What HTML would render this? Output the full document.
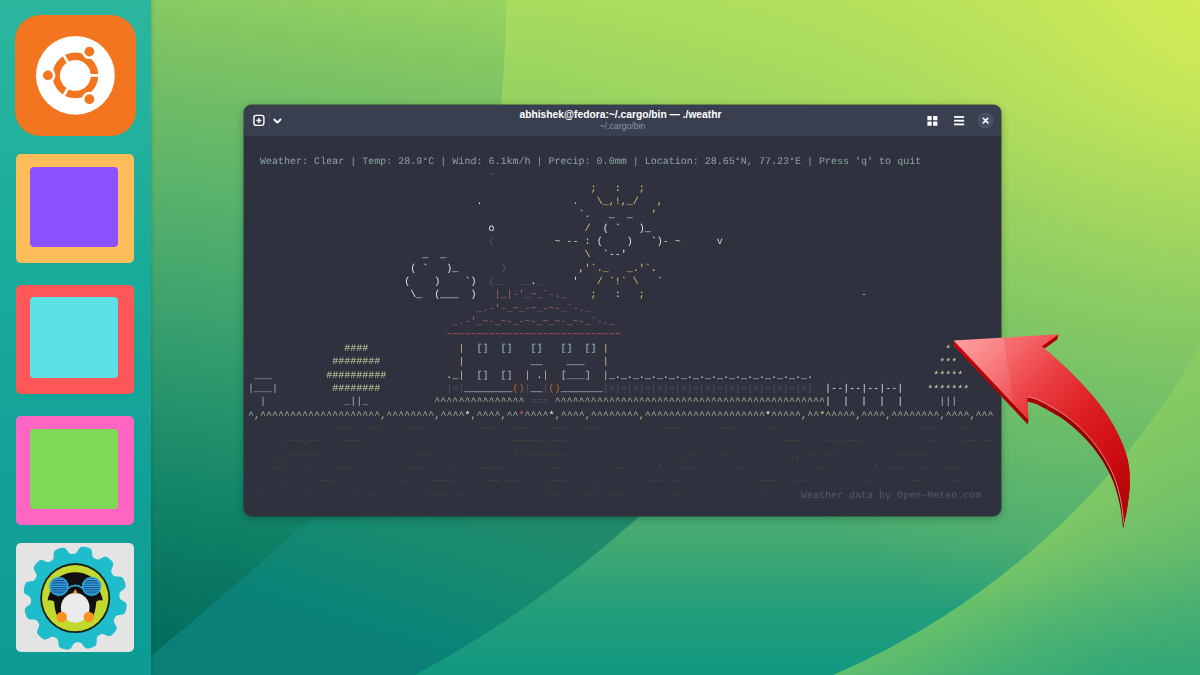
<!DOCTYPE html>
<html lang="en"><head><meta charset="utf-8"><title>weathr terminal weather</title>
<style>
html,body{margin:0;padding:0}
body{width:1200px;height:675px;overflow:hidden;position:relative;background:#3fa872;font-family:"Liberation Sans",sans-serif}
svg{position:absolute;display:block;overflow:visible}
#bg{left:0;top:0}
#dock{position:absolute;left:0;top:0;width:150.5px;height:675px;box-shadow:1px 0 3px rgba(0,40,30,.18);background:linear-gradient(180deg,#2bb69e 0%,#1aad9b 35%,#12a198 70%,#0d9b96 100%)}
.sq{position:absolute;left:16px;width:118px;height:109px;border-radius:5px}
.sq i{position:absolute;left:14px;top:12.5px;width:88px;height:80.5px;border-radius:4px;display:block}
#win{position:absolute;left:243.6px;top:105px;width:757.2px;height:411px;border-radius:8px;background:#2f323e;overflow:hidden;box-shadow:0 0 0 1px rgba(20,30,30,.35),0 2px 9px rgba(0,0,0,.28)}
#hb{position:absolute;left:0;top:0;width:100%;height:31px;background:#3a3f50;border-bottom:1px solid #292c38}
#ttl{position:absolute;left:.4px;width:753px;top:4.4px;text-align:center;color:#fff;font-weight:bold;font-size:10.27px;line-height:12px;white-space:nowrap}
#sub{position:absolute;left:2.4px;width:753px;top:16.4px;text-align:center;color:#8d93a3;font-size:8.75px;line-height:10px;white-space:nowrap}
#term{position:absolute;left:4.3px;top:51.3px;will-change:transform;margin:0;font-family:"Liberation Mono",monospace;font-size:10.03px;line-height:13.35px;color:#cfd3da;white-space:pre;text-rendering:geometricPrecision}
.st{color:#8ca3a4}.sn{color:#d7c564}.sp{color:#d9d6b4}.cl{color:#dfe2e6}.dm{color:#50556a}.gy{color:#a9adb4}
.rf{color:#9a6273}.rd{color:#c4545f}.wh{color:#d8dade}.wl{color:#c9b48e}.wn{color:#a3bcc4}.fd{color:#4b5163}.or{color:#b8681e}
.gr{color:#a6b497}.cm{color:#c2b675}.fw{color:#f2f2f2}.fr{color:#e0586a}.fy{color:#e8d46a}.pn{color:#cbdcae;position:relative;top:.9px}.tr{color:#c3d79f}
.dt{color:#4a4739}.ft{color:#535969}
</style></head><body>
<svg id="bg" width="1200" height="675" viewBox="0 0 1200 675">
<defs>
<linearGradient id="gBase" gradientUnits="userSpaceOnUse" x1="0" y1="0" x2="0" y2="675"><stop offset="0" stop-color="#a8dc5e"/><stop offset=".148" stop-color="#97d361"/><stop offset=".296" stop-color="#7ec666"/><stop offset=".444" stop-color="#6abd69"/><stop offset=".667" stop-color="#53b16d"/><stop offset=".8" stop-color="#43a972"/><stop offset=".9" stop-color="#249e7a"/><stop offset="1" stop-color="#119880"/></linearGradient>
<radialGradient id="gHi" gradientUnits="userSpaceOnUse" cx="1250" cy="-50" r="720"><stop offset="0" stop-color="#d6ed56" stop-opacity=".95"/><stop offset=".15" stop-color="#d6ed56" stop-opacity=".85"/><stop offset=".33" stop-color="#d4ec56" stop-opacity=".55"/><stop offset=".5" stop-color="#d4ec56" stop-opacity=".33"/><stop offset=".66" stop-color="#d4ec56" stop-opacity=".2"/><stop offset="1" stop-color="#d4ec56" stop-opacity="0"/></radialGradient>
<linearGradient id="gL" gradientUnits="userSpaceOnUse" x1="500" y1="0" x2="400" y2="675"><stop offset="0" stop-color="#98d460"/><stop offset=".077" stop-color="#88ca62"/><stop offset=".149" stop-color="#7cc264"/><stop offset=".207" stop-color="#70bd66"/><stop offset=".352" stop-color="#58b26b"/><stop offset=".497" stop-color="#40a46e"/><stop offset=".642" stop-color="#27956c"/><stop offset=".787" stop-color="#138468"/><stop offset=".932" stop-color="#077460"/><stop offset="1" stop-color="#046e5c"/></linearGradient>
<linearGradient id="gC" gradientUnits="userSpaceOnUse" x1="520" y1="517" x2="470" y2="675"><stop offset="0" stop-color="#208b6a"/><stop offset=".27" stop-color="#188a6e"/><stop offset=".52" stop-color="#138972"/><stop offset=".78" stop-color="#0d8576"/><stop offset="1" stop-color="#0a8078"/></linearGradient>
<radialGradient id="gAf" gradientUnits="userSpaceOnUse" cx="527.8" cy="-34.1" r="972"><stop offset=".7942" stop-color="#fff" stop-opacity="1"/><stop offset=".8663" stop-color="#fff" stop-opacity=".66"/><stop offset=".9383" stop-color="#fff" stop-opacity=".46"/><stop offset="1" stop-color="#fff" stop-opacity=".42"/></radialGradient><linearGradient id="gAy" gradientUnits="userSpaceOnUse" x1="0" y1="340" x2="0" y2="675"><stop offset="0" stop-color="#b4e65a" stop-opacity=".1"/><stop offset=".075" stop-color="#b4e65a" stop-opacity=".18"/><stop offset=".239" stop-color="#b4e65a" stop-opacity=".3"/><stop offset=".478" stop-color="#b4e65a" stop-opacity=".4"/><stop offset=".716" stop-color="#b4e65a" stop-opacity=".47"/><stop offset="1" stop-color="#b4e65a" stop-opacity=".48"/></linearGradient><mask id="mA" maskUnits="userSpaceOnUse" x="0" y="0" width="1200" height="675"><path d="M833.1 675A772 772 0 0 0 1200 345.5V675Z" fill="url(#gAf)"/></mask>
</defs>
<rect width="1200" height="675" fill="url(#gBase)"/>
<rect width="1200" height="675" fill="url(#gHi)"/>
<path d="M414.7 675A1128 1128 0 0 0 638.3 517.3L664 492L300 492L150 640V675Z" fill="url(#gC)"/>
<path d="M150 0H506.2Q505.8 52 501.3 104.3L470 300L312.6 516.8A5024.6 5024.6 0 0 1 150 656.7Z" fill="url(#gL)"/>
<rect x="820" y="330" width="380" height="345" fill="url(#gAy)" mask="url(#mA)"/>
</svg>
<div id="dock">
<svg width="121" height="121" viewBox="0 0 121 121" style="left:14.5px;top:14.5px">
<rect width="121" height="121" rx="25" fill="#f3751f"/>
<circle cx="60.4" cy="60.4" r="39.4" fill="#fff"/>
<circle cx="60.4" cy="60.4" r="19" fill="none" stroke="#f3751f" stroke-width="7.6"/>
<g stroke="#fff" stroke-width="2.6"><path d="M60.4 60.4L90 60.4M60.4 60.4L45.6 34.8M60.4 60.4L45.6 86"/></g>
<circle cx="60.4" cy="60.4" r="15.2" fill="#fff"/>
<g fill="#f3751f" stroke="#fff" stroke-width="2.6"><circle cx="74.4" cy="36.6" r="6.2"/><circle cx="32.9" cy="60.4" r="6.2"/><circle cx="74.4" cy="84.2" r="6.2"/></g>
</svg>
<div class="sq" style="top:154px;background:#ffbd59"><i style="background:#8c52ff"></i></div>
<div class="sq" style="top:284.5px;background:#ff5757"><i style="background:#5ce1e6"></i></div>
<div class="sq" style="top:416px;background:#ff66c4"><i style="background:#7ed957"></i></div>
<div class="sq" style="top:542.5px;background:#e4e4e4"></div>
<svg width="118" height="109" viewBox="0 0 118 109" style="left:16px;top:542.5px">
<path d="M103.8 55.1L103.5 54.3L103.4 53.6L103.3 52.8L103.3 52.0L103.4 51.2L103.5 50.4L103.9 49.6L104.6 48.7L105.9 47.7L107.4 46.6L108.7 45.5L109.3 44.4L109.6 43.5L109.6 42.5L109.5 41.6L109.3 40.7L109.0 39.9L108.8 39.0L108.5 38.1L108.1 37.3L107.8 36.5L107.4 35.6L106.8 34.9L106.0 34.2L104.9 33.8L103.2 33.6L101.3 33.6L99.7 33.6L98.6 33.3L97.8 32.8L97.2 32.3L96.7 31.7L96.3 31.0L95.9 30.4L95.5 29.7L95.2 28.9L95.2 28.0L95.4 26.9L95.9 25.4L96.7 23.6L97.2 22.0L97.3 20.8L97.0 19.8L96.6 19.0L96.0 18.3L95.4 17.6L94.7 17.0L94.1 16.4L93.4 15.8L92.7 15.2L91.9 14.7L91.2 14.2L90.3 13.8L89.3 13.6L88.1 13.8L86.6 14.5L84.9 15.5L83.5 16.2L82.4 16.5L81.5 16.5L80.7 16.3L80.0 16.1L79.3 15.7L78.6 15.4L77.9 14.9L77.3 14.4L76.8 13.7L76.4 12.6L76.1 11.0L75.9 9.1L75.6 7.5L75.0 6.3L74.3 5.6L73.5 5.2L72.7 4.8L71.8 4.6L70.9 4.3L70.0 4.1L69.1 4.0L68.2 3.8L67.3 3.7L66.4 3.7L65.5 3.8L64.6 4.1L63.6 4.9L62.6 6.3L61.7 7.9L60.8 9.2L60.0 10.1L59.2 10.5L58.4 10.8L57.7 10.9L56.9 11.0L56.1 11.0L55.3 10.9L54.5 10.8L53.7 10.4L52.8 9.7L51.8 8.4L50.7 6.9L49.6 5.6L48.5 5.0L47.6 4.7L46.6 4.7L45.7 4.8L44.8 5.0L44.0 5.3L43.1 5.5L42.2 5.8L41.4 6.2L40.6 6.5L39.7 6.9L39.0 7.5L38.3 8.3L37.9 9.4L37.7 11.1L37.7 13.0L37.7 14.6L37.4 15.7L36.9 16.5L36.4 17.1L35.8 17.6L35.1 18.0L34.5 18.4L33.8 18.8L33.0 19.1L32.1 19.1L31.0 18.9L29.5 18.4L27.7 17.6L26.1 17.1L24.9 17.0L23.9 17.3L23.1 17.7L22.4 18.3L21.7 18.9L21.1 19.6L20.5 20.2L19.9 20.9L19.3 21.6L18.8 22.4L18.3 23.1L17.9 24.0L17.7 25.0L17.9 26.2L18.6 27.7L19.6 29.4L20.3 30.8L20.6 31.9L20.6 32.8L20.4 33.6L20.2 34.3L19.8 35.0L19.5 35.7L19.0 36.4L18.5 37.0L17.8 37.5L16.7 37.9L15.1 38.2L13.2 38.4L11.6 38.7L10.4 39.3L9.7 40.0L9.3 40.8L8.9 41.6L8.7 42.5L8.4 43.4L8.2 44.3L8.1 45.2L7.9 46.1L7.8 47.0L7.8 47.9L7.9 48.8L8.2 49.7L9.0 50.7L10.4 51.7L12.0 52.6L13.3 53.5L14.2 54.3L14.6 55.1L14.9 55.9L15.0 56.6L15.1 57.4L15.1 58.2L15.0 59.0L14.9 59.8L14.5 60.6L13.8 61.5L12.5 62.5L11.0 63.6L9.7 64.7L9.1 65.8L8.8 66.7L8.8 67.7L8.9 68.6L9.1 69.5L9.4 70.3L9.6 71.2L9.9 72.1L10.3 72.9L10.6 73.7L11.0 74.6L11.6 75.3L12.4 76.0L13.5 76.4L15.2 76.6L17.1 76.6L18.7 76.6L19.8 76.9L20.6 77.4L21.2 77.9L21.7 78.5L22.1 79.2L22.5 79.8L22.9 80.5L23.2 81.3L23.2 82.2L23.0 83.3L22.5 84.8L21.7 86.6L21.2 88.2L21.1 89.4L21.4 90.4L21.8 91.2L22.4 91.9L23.0 92.6L23.7 93.2L24.3 93.8L25.0 94.4L25.7 95.0L26.5 95.5L27.2 96.0L28.1 96.4L29.1 96.6L30.3 96.4L31.8 95.7L33.5 94.7L34.9 94.0L36.0 93.7L36.9 93.7L37.7 93.9L38.4 94.1L39.1 94.5L39.8 94.8L40.5 95.3L41.1 95.8L41.6 96.5L42.0 97.6L42.3 99.2L42.5 101.1L42.8 102.7L43.4 103.9L44.1 104.6L44.9 105.0L45.7 105.4L46.6 105.6L47.5 105.9L48.4 106.1L49.3 106.2L50.2 106.4L51.1 106.5L52.0 106.5L52.9 106.4L53.8 106.1L54.8 105.3L55.8 103.9L56.7 102.3L57.6 101.0L58.4 100.1L59.2 99.7L60.0 99.4L60.7 99.3L61.5 99.2L62.3 99.2L63.1 99.3L63.9 99.4L64.7 99.8L65.6 100.5L66.6 101.8L67.7 103.3L68.8 104.6L69.9 105.2L70.8 105.5L71.8 105.5L72.7 105.4L73.6 105.2L74.4 104.9L75.3 104.7L76.2 104.4L77.0 104.0L77.8 103.7L78.7 103.3L79.4 102.7L80.1 101.9L80.5 100.8L80.7 99.1L80.7 97.2L80.7 95.6L81.0 94.5L81.5 93.7L82.0 93.1L82.6 92.6L83.3 92.2L83.9 91.8L84.6 91.4L85.4 91.1L86.3 91.1L87.4 91.3L88.9 91.8L90.7 92.6L92.3 93.1L93.5 93.2L94.5 92.9L95.3 92.5L96.0 91.9L96.7 91.3L97.3 90.6L97.9 90.0L98.5 89.3L99.1 88.6L99.6 87.8L100.1 87.1L100.5 86.2L100.7 85.2L100.5 84.0L99.8 82.5L98.8 80.8L98.1 79.4L97.8 78.3L97.8 77.4L98.0 76.6L98.2 75.9L98.6 75.2L98.9 74.5L99.4 73.8L99.9 73.2L100.6 72.7L101.7 72.3L103.3 72.0L105.2 71.8L106.8 71.5L108.0 70.9L108.7 70.2L109.1 69.4L109.5 68.6L109.7 67.7L110.0 66.8L110.2 65.9L110.3 65.0L110.5 64.1L110.6 63.2L110.6 62.3L110.5 61.4L110.2 60.5L109.4 59.5L108.0 58.5L106.4 57.6L105.1 56.7L104.2 55.9Z" fill="#1fbccb"/>
<g transform="translate(59.2 55.1)">
<circle r="35" fill="#14201a"/><circle r="33.2" fill="#c3d82f"/>
<path d="M-27.5 2.5C-27 -3 -24.5 -5.5 -24 -9C-22 -20 -11 -25.8 0 -25.8C11 -25.8 22 -20 24 -9C24.5 -5.5 27 -3 27.5 2.5C24 1.5 21.5 2.5 21 4C20.5 12 19 17 16 21L-16 21C-19 17 -20.5 12 -21 4C-21.5 2.5 -24 1.5 -27.5 2.5Z" fill="#101010"/>
<ellipse cx="0" cy="9.7" rx="14.3" ry="14.9" fill="#ebebeb"/>
<circle cx="-13.4" cy="18.9" r="5.2" fill="#f7941d"/><circle cx="13.6" cy="18.9" r="5.2" fill="#f7941d"/>
<path d="M-2.6 -4.6L0 -9L2.6 -4.6Z" fill="#f7941d"/>
<circle cx="-16.2" cy="-11.7" r="8.9" fill="#1b4f8f" stroke="#2aa3dc" stroke-width="1.7"/>
<path d="M-20.8 -18.6h9.2M-23.1 -16.3h13.8M-24.2 -14.0h15.9M-24.5 -11.7h16.6M-24.2 -9.4h15.9M-23.1 -7.1h13.8M-20.8 -4.8h9.2" stroke="#38a9e0" stroke-width="1.1" fill="none"/>
<circle cx="16.4" cy="-11.7" r="8.9" fill="#1b4f8f" stroke="#2aa3dc" stroke-width="1.7"/>
<path d="M11.8 -18.6h9.2M9.5 -16.3h13.8M8.4 -14.0h15.9M8.1 -11.7h16.6M8.4 -9.4h15.9M9.5 -7.1h13.8M11.8 -4.8h9.2" stroke="#38a9e0" stroke-width="1.1" fill="none"/>
<path d="M-7.6 -9.5Q0 -16 7.8 -9.5" stroke="#2aa3dc" stroke-width="1.8" fill="none"/>
</g>
</svg>
</div>
<div id="win">
<div id="hb">
<svg width="40" height="31" viewBox="0 0 40 31" style="left:0;top:0">
<rect x="9.9" y="10.4" width="10" height="10" rx="2.3" fill="none" stroke="#fff" stroke-width="1.4"/>
<path d="M12.4 15.4h5M14.9 12.9v5" stroke="#fff" stroke-width="1.5" fill="none"/>
<path d="M25.5 7.3v18.2" stroke="#464c5f" stroke-width="1"/>
<path d="M30.3 14.5l3.1 3.1 3.1-3.1" stroke="#fff" stroke-width="1.9" fill="none" stroke-linecap="round" stroke-linejoin="round"/>
</svg>
<div id="ttl">abhishek@fedora:~/.cargo/bin — ./weathr</div>
<div id="sub">~/.cargo/bin</div>
<svg width="80" height="31" viewBox="0 0 80 31" style="left:677px;top:0">
<g fill="#fff"><rect x="6.4" y="10.9" width="4.3" height="4.3" rx=".5"/><rect x="12.1" y="10.9" width="4.3" height="4.3" rx=".5"/><rect x="6.4" y="16.5" width="4.3" height="4.3" rx=".5"/><rect x="12.1" y="16.5" width="4.3" height="4.3" rx=".5"/>
<rect x="33" y="11.1" width="10.2" height="1.8"/><rect x="33" y="14.8" width="10.2" height="1.8"/><rect x="33" y="18.5" width="10.2" height="1.8"/></g>
<circle cx="64.6" cy="15.6" r="8" fill="#4a4f61"/>
<path d="M62.3 13.3l4.6 4.6M66.9 13.3l-4.6 4.6" stroke="#fff" stroke-width="1.6" stroke-linecap="round"/>
</svg>
</div>
<pre id="term">  <span class="st">Weather: Clear | Temp: 28.9°C | Wind: 6.1km/h | Precip: 0.0mm | Location: 28.65°N, 77.23°E | Press 'q' to quit</span>
                                        <span class="dm">~</span>
                                                         <span class="sn">;</span>   <span class="sp">:</span>   <span class="sn">;</span>
                                      <span class="cl">.</span>               <span class="sp">.</span>   <span class="sn">\_,!,_/   ,</span>
                                                       <span class="sp">`.</span>   <span class="cl">_  _</span>   <span class="sn">'</span>
                                        <span class="cl">o</span>               <span class="sn">/</span>  <span class="cl">( `   )_</span>
                                        <span class="dm">(</span>          <span class="sp">~ -- :</span> <span class="cl">(    )   `)</span><span class="sp">- ~      v</span>
                             <span class="cl">_  _</span>                       <span class="sn">\</span>  <span class="cl">`--'</span>
                           <span class="cl">( `   )_</span>       <span class="dm">)</span>            <span class="sp">,</span><span class="sn">'`._   _.'`</span><span class="sp">.</span>
                          <span class="cl">(    )    `)</span>  <span class="dm">(__  __</span><span class="cl">.</span><span class="dm">_</span>     <span class="sp">'</span>   <span class="sn">/ `!` \</span>   <span class="sp">`</span>
                           <span class="cl">\_  (___  )</span>   <span class="rf">|_|-'_~_`-._</span>    <span class="sn">;</span>   <span class="sp">:</span>   <span class="sn">;</span>                                    <span class="gy">-</span>
                                      <span class="rf">_.-'-_~_-~_-~-_`-._</span>
                                  <span class="rf">_.-'_~-_~-_-~-_~_~-_~-_`-._</span>
                                 <span class="rd">~~~~~~~~~~~~~~~~~~~~~~~~~~~~~</span>
                <span class="tr">####</span>               <span class="wl">|</span>  <span class="wn">[]  []   []   []  []</span> <span class="wl">|</span>                                                        <span class="pn">*</span>
              <span class="tr">########</span>             <span class="wl">|</span>           <span class="wh">__    ___</span>   <span class="wl">|</span>                                                       <span class="pn">***</span>
 <span class="gy">___</span>         <span class="tr">##########</span>          <span class="wh">._</span><span class="wl">|</span>  <span class="wn">[]  []</span>  <span class="wl">|</span> <span class="wh">.</span><span class="wl">|</span>  <span class="wn">[___]</span>  <span class="wl">|</span><span class="wh">_._._._._._._._._._._._._._._._._.</span>                    <span class="pn">*****</span>
<span class="gy">|___|</span>         <span class="tr">########</span>           <span class="fd">|=|</span><span class="wh">________</span><span class="or">()</span><span class="fd">|</span><span class="wh">__</span><span class="fd">|</span><span class="or">()</span><span class="wh">_______</span><span class="fd">|=|=|=|=|=|=|=|=|=|=|=|=|=|=|=|=|=|</span>  <span class="wh">|--|--|--|--|</span>    <span class="pn">*******</span>
  <span class="gy">|             _||_</span>           <span class="gr">^^^^^^^^^^^^^^^</span> <span class="fd">===</span> <span class="gr">^^^^^^^^^^^^^^^^^^^^^^^^^^^^^^^^^^^^^^^^^^^^^</span><span class="wh">|  |  |  |  |</span>      <span class="gy">|||</span>
<span class="gr">^</span><span class="cm">,</span><span class="gr">^^^^^^^^^^^^^^^^^^^^</span><span class="cm">,</span><span class="gr">^^^^^^^^</span><span class="cm">,</span><span class="gr">^^^^</span><span class="fw">*</span><span class="cm">,</span><span class="gr">^^^^</span><span class="cm">,</span><span class="gr">^^</span><span class="fr">*</span><span class="gr">^^^^</span><span class="fw">*</span><span class="cm">,</span><span class="gr">^^^^</span><span class="cm">,</span><span class="gr">^^^^^^^^</span><span class="cm">,</span><span class="gr">^^^^^^^^^^^^^^^^^^^^</span><span class="fw">*</span><span class="gr">^^^^^</span><span class="cm">,</span><span class="gr">^^</span><span class="fy">*</span><span class="gr">^^^^^</span><span class="cm">,</span><span class="gr">^^^^</span><span class="cm">,</span><span class="gr">^^^^^^^^</span><span class="cm">,</span><span class="gr">^^^^</span><span class="cm">,</span><span class="gr">^^^</span>
              <span class="dt">~~~   ~~    ~~~         ~~~   ~~~   ~~~   ~~          .~~~      ~~~     ~~                        ~~    ~~</span>
      <span class="dt">~~~.~~ .  ~~~                         ~~~~~ ~~~                                    ~~~ .  ~~ ~~~           ~     ~~ ~~</span>
    <span class="dt">., ~~~~~                ~~~             ' ~~~~~~~                  .,~~   ~~          ., ~~ ~~          ~~~~~</span>
    <span class="dt">~~   ~    ~~~         ~~~    ~    ~~~~    .   ~~      .  ~~     '   ~~       ~            ~~        '  ~~   ~   ~~</span>
     <span class="dt">~      ~~         . ~    ~~~~      ~~ ~~     ~~~     ~        ~~  ~             ~~~   ~~          ~      ~~     ~</span>
  <span class="dt">~       ~       ~ ~        ~ ~~  ~              ~~    ~~  ~~        ~~      ~      ~</span>      <span class="ft">Weather data by Open-Meteo.com</span></pre>
</div>
<svg id="arrow" width="1200" height="675" viewBox="0 0 1200 675" style="left:0;top:0">
<defs>
<linearGradient id="aF" gradientUnits="userSpaceOnUse" x1="958" y1="338" x2="1125" y2="500"><stop offset="0" stop-color="#ff8c8c"/><stop offset=".2" stop-color="#f6686b"/><stop offset=".4" stop-color="#ea3e42"/><stop offset=".6" stop-color="#de2024"/><stop offset=".85" stop-color="#cb0b0f"/><stop offset="1" stop-color="#b40508"/></linearGradient>
<linearGradient id="aE" gradientUnits="userSpaceOnUse" x1="958" y1="345" x2="1125" y2="500"><stop offset="0" stop-color="#c60608"/><stop offset=".5" stop-color="#9c0002"/><stop offset="1" stop-color="#840002"/></linearGradient>
<linearGradient id="aC" gradientUnits="userSpaceOnUse" x1="955" y1="340" x2="1015" y2="400"><stop offset="0" stop-color="#fff" stop-opacity=".17"/><stop offset="1" stop-color="#fff" stop-opacity=".07"/></linearGradient>
</defs>
<path d="M953.8 341.3L1058.7 335.0L1041.8 347.1C1046.4 351.2 1059.9 362.3 1069.5 371.9C1079.0 381.5 1091.3 394.4 1099.2 404.5C1107.1 414.6 1112.3 423.5 1117.0 432.7C1121.7 441.9 1125.3 451.0 1127.4 459.4C1129.5 467.8 1129.7 475.2 1129.7 483.1C1129.7 491.0 1128.4 499.9 1127.4 506.8C1126.4 513.7 1124.4 521.6 1123.8 524.6C1123.1 520.1 1122.0 506.8 1119.9 497.9C1117.8 489.0 1115.5 480.3 1111.1 471.2C1106.6 462.1 1100.2 451.7 1093.3 443.1C1086.3 434.5 1078.4 426.3 1069.5 419.4C1060.6 412.5 1046.9 405.2 1039.9 401.6C1032.8 398.0 1029.2 398.3 1027.1 397.6L1028.5 420.4ZM953.6 342.1L1058.5 335.8L1041.6 347.9C1046.3 352.0 1059.8 363.1 1069.3 372.7C1078.9 382.3 1091.1 395.2 1099.0 405.3C1107.0 415.4 1112.1 424.4 1116.8 433.5C1121.5 442.6 1125.1 451.8 1127.2 460.2C1129.4 468.6 1129.5 476.0 1129.5 483.9C1129.5 491.8 1128.2 500.7 1127.2 507.6C1126.3 514.5 1124.2 522.4 1123.6 525.4C1123.0 521.0 1121.9 507.6 1119.7 498.7C1117.6 489.8 1115.4 481.1 1110.9 472.0C1106.5 462.9 1100.1 452.5 1093.1 443.9C1086.2 435.3 1078.2 427.1 1069.3 420.2C1060.4 413.3 1046.8 406.0 1039.7 402.4C1032.7 398.8 1029.1 399.1 1026.9 398.4L1028.3 421.2ZM953.5 342.9L1058.4 336.6L1041.5 348.7C1046.1 352.8 1059.6 363.9 1069.2 373.5C1078.8 383.1 1091.0 396.0 1098.9 406.1C1106.8 416.2 1112.0 425.1 1116.7 434.3C1121.4 443.4 1125.0 452.6 1127.1 461.0C1129.2 469.4 1129.4 476.8 1129.4 484.7C1129.4 492.6 1128.1 501.5 1127.1 508.4C1126.1 515.3 1124.1 523.2 1123.5 526.2C1122.9 521.8 1121.7 508.4 1119.6 499.5C1117.5 490.6 1115.2 481.9 1110.8 472.8C1106.4 463.7 1099.9 453.3 1093.0 444.7C1086.1 436.1 1078.1 427.9 1069.2 421.0C1060.3 414.1 1046.7 406.8 1039.6 403.2C1032.5 399.6 1028.9 399.9 1026.8 399.2L1028.2 422.0ZM953.4 343.7L1058.3 337.4L1041.4 349.5C1046.0 353.6 1059.5 364.7 1069.1 374.3C1078.6 383.9 1090.9 396.8 1098.8 406.9C1106.7 417.0 1111.9 425.9 1116.6 435.1C1121.3 444.2 1124.9 453.4 1127.0 461.8C1129.1 470.2 1129.3 477.6 1129.3 485.5C1129.3 493.4 1128.0 502.3 1127.0 509.2C1126.0 516.1 1124.0 524.0 1123.4 527.0C1122.7 522.5 1121.6 509.2 1119.5 500.3C1117.4 491.4 1115.1 482.7 1110.7 473.6C1106.2 464.5 1099.8 454.1 1092.9 445.5C1085.9 436.9 1078.0 428.7 1069.1 421.8C1060.2 414.9 1046.5 407.6 1039.5 404.0C1032.4 400.4 1028.8 400.7 1026.7 400.0L1028.1 422.8ZM953.2 344.5L1058.1 338.2L1041.2 350.3C1045.9 354.4 1059.4 365.5 1068.9 375.1C1078.5 384.7 1090.7 397.6 1098.6 407.7C1106.6 417.8 1111.7 426.8 1116.4 435.9C1121.1 445.0 1124.7 454.2 1126.8 462.6C1129.0 471.0 1129.1 478.4 1129.1 486.3C1129.1 494.2 1127.8 503.1 1126.8 510.0C1125.9 516.9 1123.8 524.8 1123.2 527.8C1122.6 523.3 1121.5 510.0 1119.3 501.1C1117.2 492.2 1115.0 483.5 1110.5 474.4C1106.1 465.3 1099.7 454.9 1092.8 446.3C1085.8 437.7 1077.8 429.5 1068.9 422.6C1060.0 415.7 1046.4 408.4 1039.3 404.8C1032.3 401.2 1028.7 401.5 1026.5 400.8L1027.9 423.6ZM953.1 345.3L1058.0 339.0L1041.1 351.1C1045.7 355.2 1059.3 366.3 1068.8 375.9C1078.4 385.5 1090.6 398.4 1098.5 408.5C1106.4 418.6 1111.6 427.5 1116.3 436.7C1121.0 445.9 1124.6 455.0 1126.7 463.4C1128.8 471.8 1129.0 479.2 1129.0 487.1C1129.0 495.0 1127.7 503.9 1126.7 510.8C1125.7 517.7 1123.7 525.6 1123.1 528.6C1122.5 524.1 1121.3 510.8 1119.2 501.9C1117.1 493.0 1114.9 484.3 1110.4 475.2C1106.0 466.1 1099.6 455.7 1092.6 447.1C1085.7 438.5 1077.7 430.3 1068.8 423.4C1059.9 416.5 1046.3 409.2 1039.2 405.6C1032.2 402.0 1028.6 402.3 1026.4 401.6L1027.8 424.4Z" fill="url(#aE)"/>
<path d="M953.9 340.5L1058.8 334.2L1041.9 346.3C1046.5 350.4 1060.0 361.5 1069.6 371.1C1079.2 380.7 1091.4 393.6 1099.3 403.7C1107.2 413.8 1112.4 422.8 1117.1 431.9C1121.8 441.0 1125.4 450.2 1127.5 458.6C1129.6 467.0 1129.8 474.4 1129.8 482.3C1129.8 490.2 1128.5 499.1 1127.5 506.0C1126.5 512.9 1124.5 520.8 1123.9 523.8C1123.2 519.3 1122.1 506.0 1120.0 497.1C1117.9 488.2 1115.6 479.5 1111.2 470.4C1106.8 461.3 1100.3 450.9 1093.4 442.3C1086.5 433.7 1078.5 425.5 1069.6 418.6C1060.7 411.7 1047.1 404.4 1040.0 400.8C1032.9 397.2 1029.3 397.5 1027.2 396.8L1028.6 419.6Z" fill="url(#aF)"/>
<path d="M953.9 340.5L1003.5 337.5L1013.6 405Z" fill="url(#aC)"/>
<path d="M1027.2 396.8C1029.3 397.5 1032.9 397.2 1040.0 400.8C1047.1 404.4 1060.7 411.7 1069.6 418.6C1078.5 425.5 1086.5 433.7 1093.4 442.3C1100.3 450.9 1106.8 461.3 1111.2 470.4C1115.6 479.5 1117.9 488.2 1120.0 497.1C1122.1 506.0 1123.2 519.3 1123.9 523.8" fill="none" stroke="#ffc4c4" stroke-opacity=".75" stroke-width=".9"/>
<path d="M954.5 341L1028.3 419" fill="none" stroke="#ffb0b0" stroke-opacity=".5" stroke-width=".8"/>
</svg>
</body></html>
